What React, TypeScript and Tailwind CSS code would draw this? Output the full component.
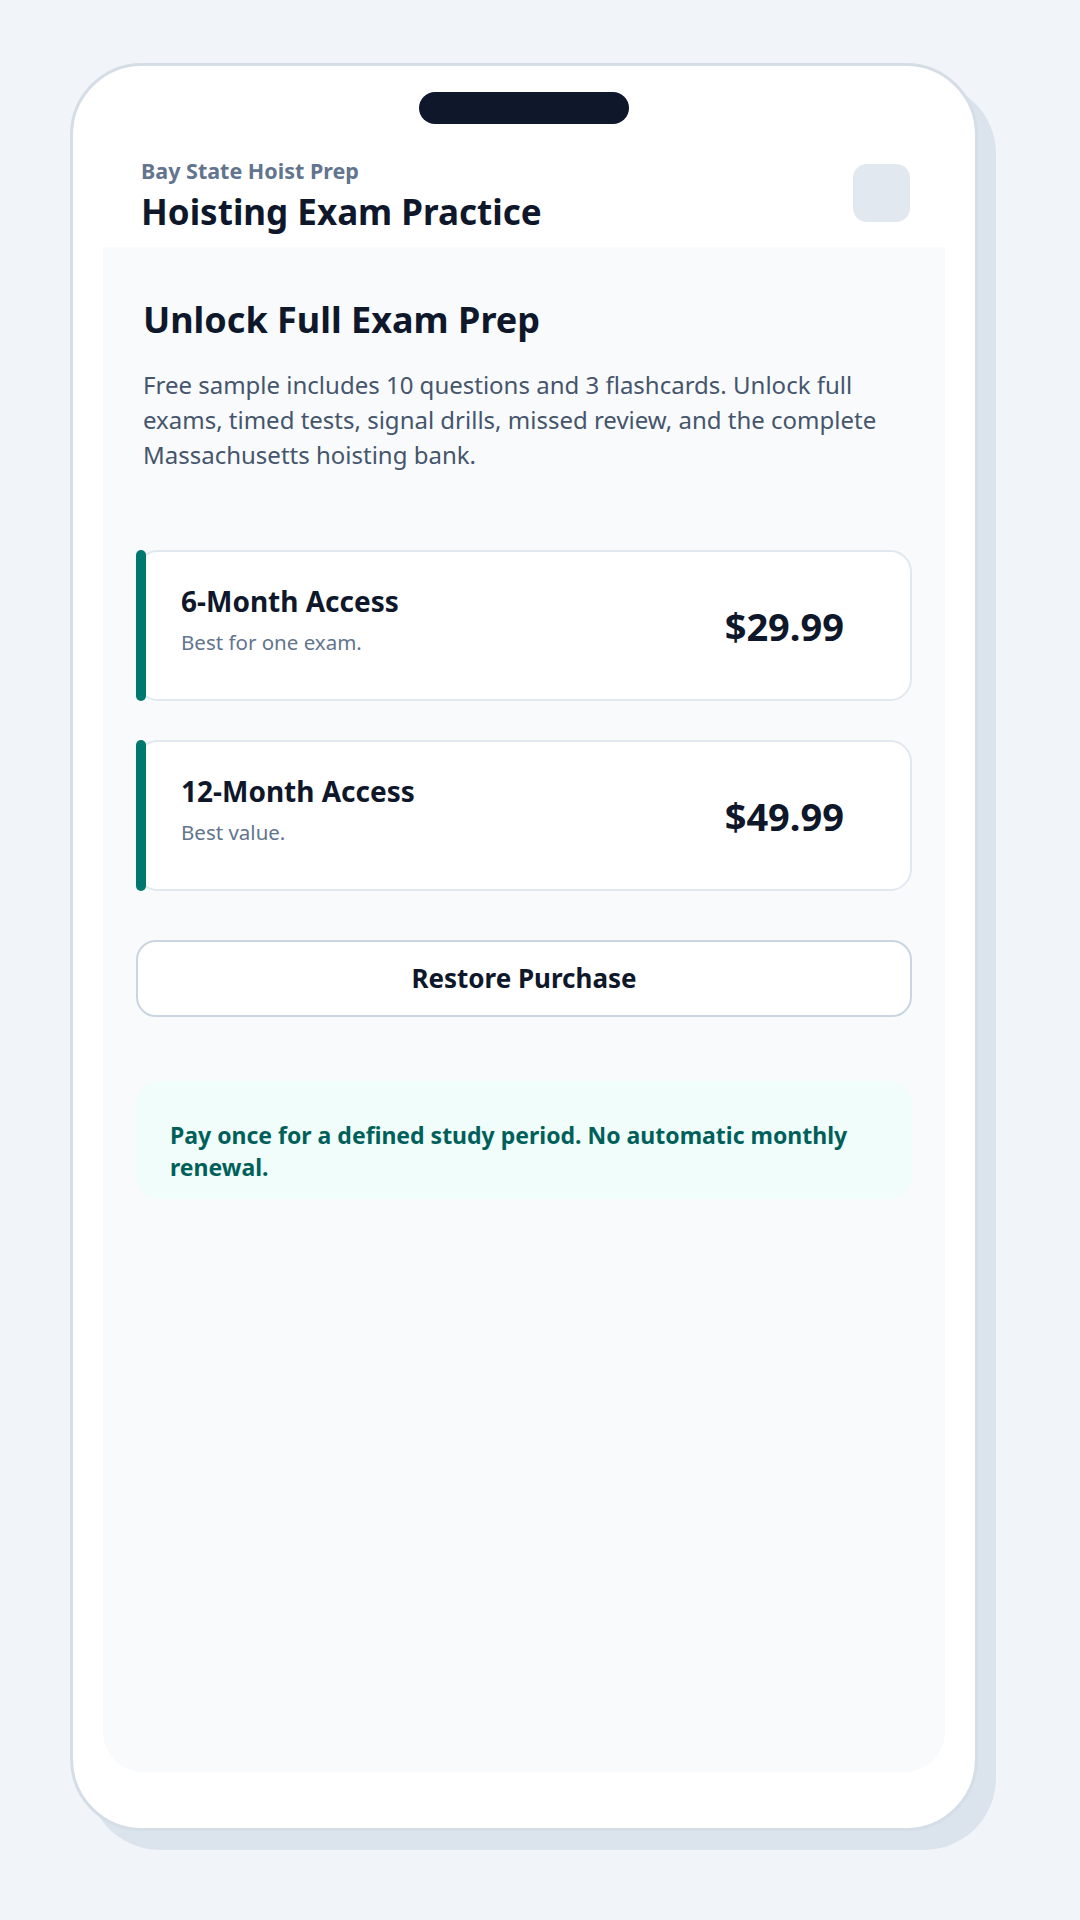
import React from 'react';

interface Plan {
  name: string;
  note: string;
  price: string;
}

const plans: Plan[] = [
  { name: '6-Month Access', note: 'Best for one exam.', price: '$29.99' },
  { name: '12-Month Access', note: 'Best value.', price: '$49.99' },
];

function PlanCard({ plan }: { plan: Plan }) {
  return (
    <button
      type="button"
      className="relative flex h-[151px] w-full items-center justify-between rounded-[22px] border-2 border-slate-200 bg-white pl-[43px] pr-[66px] text-left"
    >
      {/* teal accent bar on the left edge */}
      <span className="absolute -bottom-[2px] -left-[2px] -top-[2px] w-[10px] rounded-full bg-teal-700" />
      <div className="mt-[32px] flex flex-col self-start">
        <span className="text-[28px] font-bold leading-[34px] text-slate-900">{plan.name}</span>
        <span className="mt-[10px] text-[20.5px] leading-[28px] text-slate-500">{plan.note}</span>
      </div>
      <span className="text-[38px] font-bold leading-[44px] text-slate-900">{plan.price}</span>
    </button>
  );
}

export default function App() {
  return (
    <div className="min-h-[1920px] bg-slate-100 pl-[70px] pt-[63px] font-['Noto_Sans',sans-serif]">
      <div className="flex h-[1768px] w-[908px] flex-col rounded-[72px] border-[3px] border-[#d5dde7] bg-white px-[30px] pb-[56px] shadow-[18px_19px_0_#dbe3ec]">
        <div className="mx-auto mt-[26px] h-[32px] w-[210px] shrink-0 rounded-full bg-slate-900" />

        <header className="flex h-[123px] shrink-0 items-start justify-between pl-[38px] pr-[35px] pt-[33px]">
          <div className="flex flex-col">
            <span className="text-[21.5px] font-bold leading-[28px] text-slate-500">Bay State Hoist Prep</span>
            <h1 className="mt-[5px] text-[35px] font-bold leading-[44px] text-slate-900">Hoisting Exam Practice</h1>
          </div>
          <button type="button" aria-label="Menu" className="mt-[7px] h-[58px] w-[57px] rounded-[14px] bg-slate-200" />
        </header>

        <main className="flex flex-1 flex-col rounded-b-[40px] bg-slate-50 px-[33px] pt-[51px]">
          <section className="px-[7px]">
            <h2 className="text-[36px] font-bold leading-[44px] text-slate-900">Unlock Full Exam Prep</h2>
            <p className="mt-[25px] text-[24px] leading-[35px] text-slate-600">
              Free sample includes 10 questions and 3 flashcards. Unlock full exams, timed tests, signal drills,
              missed review, and the complete Massachusetts hoisting bank.
            </p>
          </section>

          <div className="mt-[78px] flex flex-col gap-[39px]">
            {plans.map(plan => (
              <PlanCard key={plan.name} plan={plan} />
            ))}
          </div>

          <button
            type="button"
            className="mt-[49px] h-[77px] w-full rounded-[20px] border-2 border-slate-300 bg-white text-[26px] font-bold text-slate-900"
          >
            Restore Purchase
          </button>

          <div className="mt-[64px] rounded-[24px] bg-teal-50 pb-[16px] pl-[34px] pr-[30px] pt-[38px]">
            <p className="text-[23px] font-bold leading-[32px] text-teal-800">
              Pay once for a defined study period. No automatic monthly renewal.
            </p>
          </div>
        </main>
      </div>
    </div>
  );
}
